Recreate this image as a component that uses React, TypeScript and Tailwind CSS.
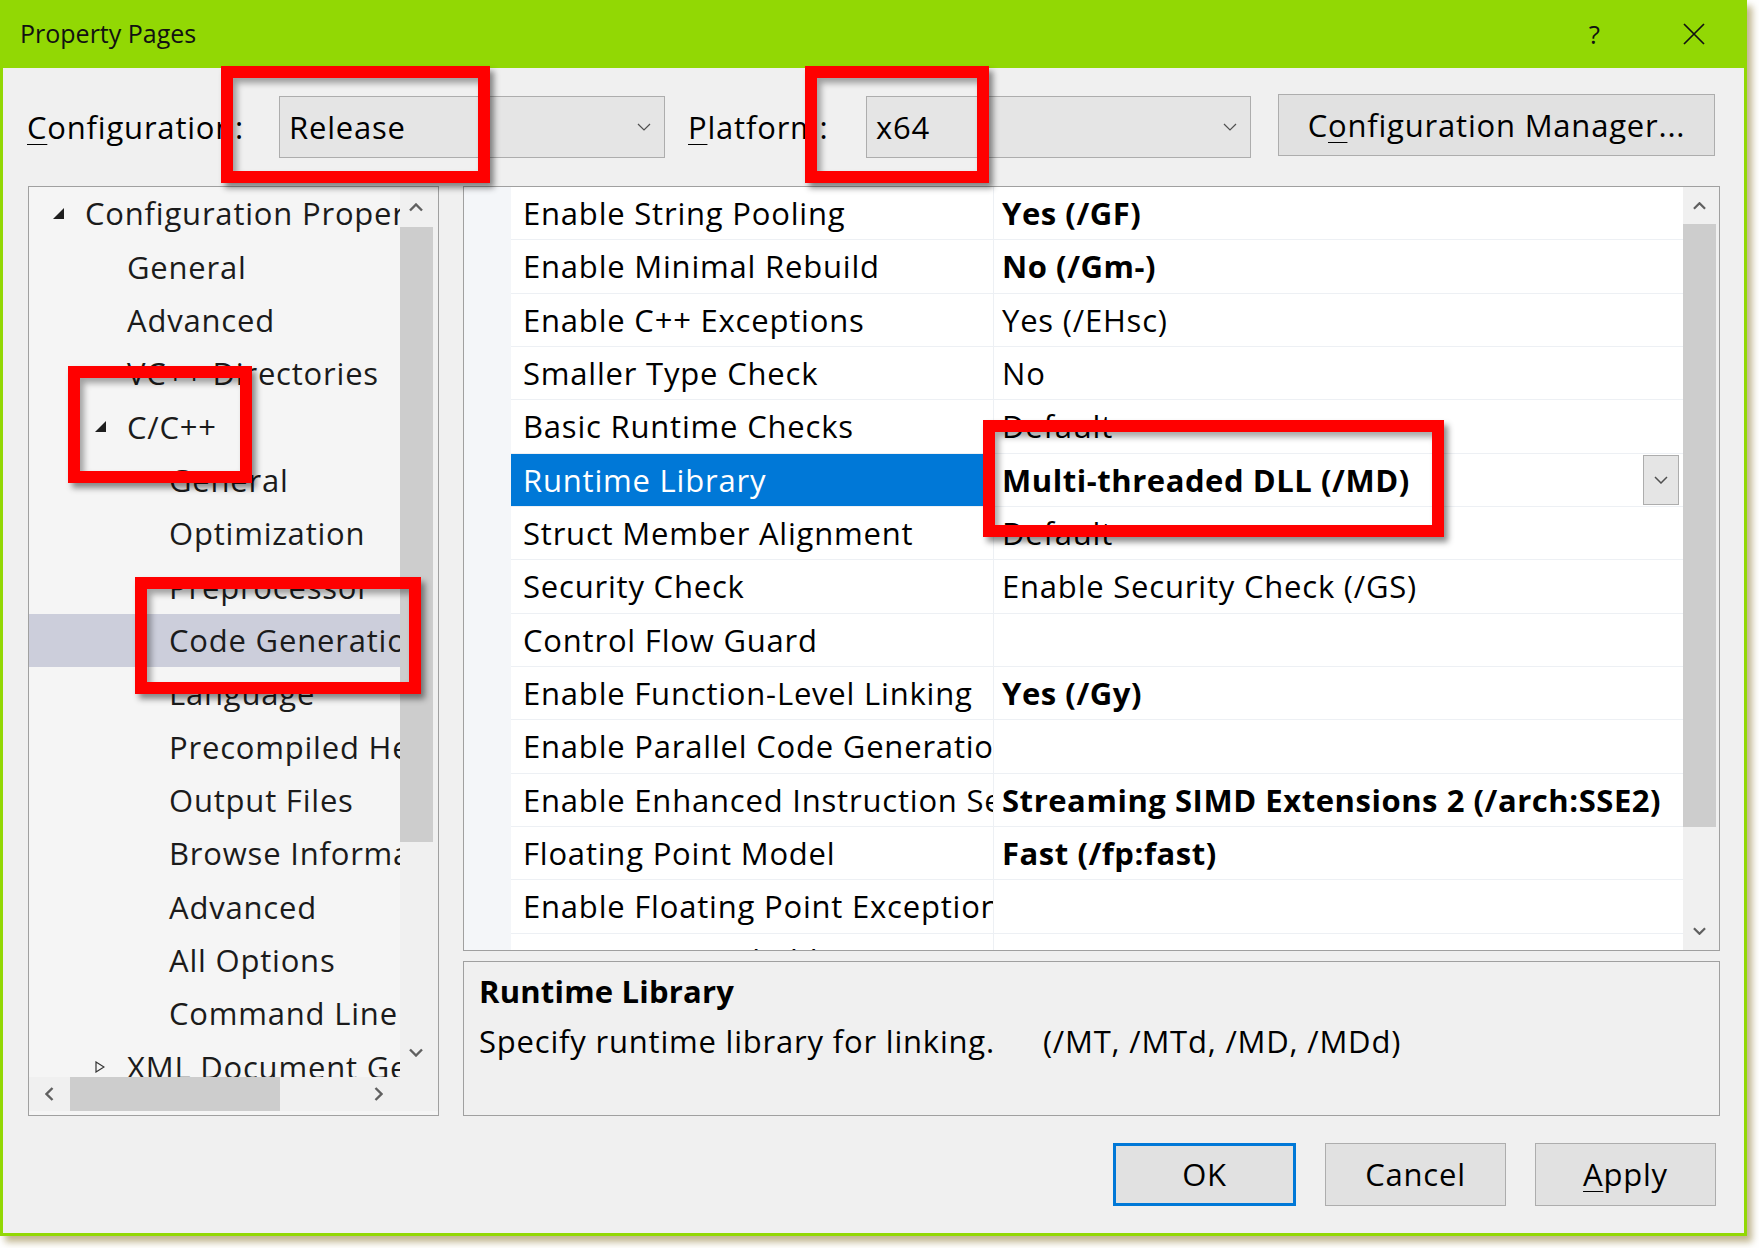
import React from 'react';

type TreeItem = { label: string; level: 0 | 1 | 2; arrow?: 'open' | 'closed'; selected?: boolean };

const treeItems: TreeItem[] = [
  { label: 'Configuration Properties', level: 0, arrow: 'open' },
  { label: 'General', level: 1 },
  { label: 'Advanced', level: 1 },
  { label: 'VC++ Directories', level: 1 },
  { label: 'C/C++', level: 1, arrow: 'open' },
  { label: 'General', level: 2 },
  { label: 'Optimization', level: 2 },
  { label: 'Preprocessor', level: 2 },
  { label: 'Code Generation', level: 2, selected: true },
  { label: 'Language', level: 2 },
  { label: 'Precompiled Headers', level: 2 },
  { label: 'Output Files', level: 2 },
  { label: 'Browse Information', level: 2 },
  { label: 'Advanced', level: 2 },
  { label: 'All Options', level: 2 },
  { label: 'Command Line', level: 2 },
  { label: 'XML Document Generator', level: 1, arrow: 'closed' },
];

const indent = { 0: 'pl-[24px]', 1: 'pl-[66px]', 2: 'pl-[108px]' };

type Prop = { name: string; value: string; bold?: boolean; selected?: boolean };

const props: Prop[] = [
  { name: 'Enable String Pooling', value: 'Yes (/GF)', bold: true },
  { name: 'Enable Minimal Rebuild', value: 'No (/Gm-)', bold: true },
  { name: 'Enable C++ Exceptions', value: 'Yes (/EHsc)' },
  { name: 'Smaller Type Check', value: 'No' },
  { name: 'Basic Runtime Checks', value: 'Default' },
  { name: 'Runtime Library', value: 'Multi-threaded DLL (/MD)', bold: true, selected: true },
  { name: 'Struct Member Alignment', value: 'Default' },
  { name: 'Security Check', value: 'Enable Security Check (/GS)' },
  { name: 'Control Flow Guard', value: '' },
  { name: 'Enable Function-Level Linking', value: 'Yes (/Gy)', bold: true },
  { name: 'Enable Parallel Code Generation', value: '' },
  { name: 'Enable Enhanced Instruction Set', value: 'Streaming SIMD Extensions 2 (/arch:SSE2)', bold: true },
  { name: 'Floating Point Model', value: 'Fast (/fp:fast)', bold: true },
  { name: 'Enable Floating Point Exceptions', value: '' },
  { name: 'Create Hotpatchable Image', value: '' },
  { name: 'Spectre Mitigation', value: '' },
];

const redBoxes = [
  'left-[221px] top-[66px] w-[269px] h-[117px]',
  'left-[805px] top-[66px] w-[184px] h-[117px]',
  'left-[68px] top-[366px] w-[184px] h-[117px]',
  'left-[135px] top-[577px] w-[286px] h-[117px]',
  'left-[983px] top-[420px] w-[461px] h-[117px]',
];

const Chevron = ({ dir, className = '', width = 1.3 }: { dir: 'up' | 'down' | 'left' | 'right'; className?: string; width?: number }) => {
  const vertical = dir === 'up' || dir === 'down';
  const d = { up: 'M1 7l6-6 6 6', down: 'M1 1l6 6 6-6', left: 'M7 1L1 7l6 6', right: 'M1 1l6 6-6 6' }[dir];
  return (
    <svg viewBox={vertical ? '0 0 14 8' : '0 0 8 14'} className={className} fill="none" stroke="currentColor" strokeWidth={width}>
      <path d={d} />
    </svg>
  );
};

const Combo = ({ value, w }: { value: string; w: string }) => (
  <div className={`${w} h-[62px] flex items-center pl-[9px] pr-[13px] bg-[#e5e5e5] border border-[#adadad]`}>
    <span>{value}</span>
    <Chevron dir="down" className="ml-auto w-[14px] h-[8px] text-[#505050]" width={1.2} />
  </div>
);

const Tree = () => (
  <div className="flex flex-col w-[411px] h-[930px] border border-[#a0a0a0] bg-[#f5f5f5] text-[#1b1b1b]">
    <div className="flex flex-1 min-h-0">
      <div className="flex-1 min-w-0 overflow-hidden">
        {treeItems.map((it, i) => (
          <div
            key={i}
            className={`flex items-center h-[53.33px] whitespace-nowrap ${indent[it.level]} ${it.selected ? 'bg-[#cccedb]' : ''}`}
          >
            <span className="w-[32px] shrink-0 flex items-center">
              {it.arrow === 'open' && (
                <svg viewBox="0 0 10 10" className="w-[11px] h-[11px]">
                  <polygon points="10,0 10,10 0,10" fill="#1e1e1e" />
                </svg>
              )}
              {it.arrow === 'closed' && (
                <svg viewBox="0 0 10 12" className="w-[10px] h-[12px]">
                  <polygon points="1,1 9,6 1,11" fill="none" stroke="#333" strokeWidth="1.2" />
                </svg>
              )}
            </span>
            <span>{it.label}</span>
          </div>
        ))}
      </div>
      <div className="w-[38px] shrink-0 flex flex-col bg-[#f0f0f0]">
        <div className="h-[40px] flex items-center pl-[9px]">
          <Chevron dir="up" className="w-[14px] h-[9px] text-[#606060]" width={2.4} />
        </div>
        <div className="h-[615px] w-[33px] bg-[#cdcdcd]" />
        <div className="flex-1 flex items-end pb-[20px] pl-[9px]">
          <Chevron dir="down" className="w-[14px] h-[9px] text-[#606060]" width={2.4} />
        </div>
      </div>
    </div>
    <div className="flex h-[38px] pb-[4px] shrink-0">
      <div className="w-[371px] flex items-center bg-[#f0f0f0]">
        <div className="w-[41px] flex justify-center">
          <Chevron dir="left" className="w-[9px] h-[14px] text-[#606060]" width={2.4} />
        </div>
        <div className="w-[210px] h-full bg-[#cdcdcd]" />
        <div className="flex-1 flex justify-end pr-[17px]">
          <Chevron dir="right" className="w-[9px] h-[14px] text-[#606060]" width={2.4} />
        </div>
      </div>
      <div className="flex-1 bg-[#f0f0f0]" />
    </div>
  </div>
);

const Grid = () => (
  <div className="flex h-[765px] border border-[#a0a0a0] bg-white">
    <div className="flex-1 min-w-0 overflow-hidden">
      {props.map((p, i) => (
        <div key={i} className="flex h-[53.33px]">
          <div className="w-[47px] shrink-0 bg-[#f4f6f9]" />
          <div
            className={`w-[483px] shrink-0 flex items-center pl-[12px] overflow-hidden whitespace-nowrap border-b border-r border-[#edf0f4] ${
              p.selected ? 'bg-[#0078d7] text-white' : ''
            }`}
          >
            {p.name}
          </div>
          <div className="flex-1 min-w-0 flex items-center pl-[8px] overflow-hidden whitespace-nowrap border-b border-[#edf0f4]">
            <span className={p.bold ? 'font-bold tracking-[0.55px]' : ''}>{p.value}</span>
            {p.selected && (
              <div className="ml-auto mr-[4px] w-[36px] h-[50px] flex items-center justify-center bg-[#e5e5e5] border border-[#adadad]">
                <Chevron dir="down" className="w-[14px] h-[8px] text-[#505050]" width={1.5} />
              </div>
            )}
          </div>
        </div>
      ))}
    </div>
    <div className="w-[36px] shrink-0 flex flex-col bg-[#f0f0f0]">
      <div className="h-[37px] flex items-center pl-[10px]">
        <Chevron dir="up" className="w-[13px] h-[8px] text-[#606060]" width={2.4} />
      </div>
      <div className="h-[603px] w-[33px] bg-[#cdcdcd]" />
      <div className="flex-1 flex items-end pb-[15px] pl-[10px]">
        <Chevron dir="down" className="w-[13px] h-[8px] text-[#606060]" width={2.4} />
      </div>
    </div>
  </div>
);

const Button = ({ children, primary }: { children: React.ReactNode; primary?: boolean }) => (
  <div
    className={`h-[63px] flex items-center justify-center bg-[#e1e1e1] ${
      primary ? 'w-[183px] border-[3px] border-[#0078d7]' : 'w-[181px] border border-[#adadad]'
    }`}
  >
    {children}
  </div>
);

export default function App() {
  return (
    <div className="relative w-[1759px] h-[1248px] overflow-hidden bg-white font-['Open_Sans',sans-serif] text-black">
      <div className="flex flex-col w-[1747px] h-[1236px] bg-[#92d804] px-[3px] pb-[3px] shadow-[5px_6px_7px_rgba(140,120,50,0.55)]">
        {/* title bar */}
        <div className="flex items-center h-[68px] shrink-0 pl-[17px] pr-[39px] text-[#111]">
          <span className="text-[25px]">Property Pages</span>
          <span className="ml-auto text-[26px] leading-none">?</span>
          <svg viewBox="0 0 22 22" className="ml-[83px] w-[22px] h-[22px]" stroke="#111" strokeWidth="1.7">
            <path d="M1 1l20 20M21 1L1 21" />
          </svg>
        </div>

        <div className="flex-1 flex flex-col bg-[#f0f0f0] pl-[25px] pr-[24px] pt-[28px] pb-[27px] text-[31px] tracking-[0.8px]">
          {/* configuration row */}
          <div className="flex items-center h-[62px] shrink-0">
            <div className="w-[252px] -ml-px whitespace-nowrap">
              <u className="underline-offset-[5px] decoration-1">C</u>onfiguration:
            </div>
            <Combo value="Release" w="w-[386px]" />
            <div className="w-[201px] pl-[23px] whitespace-nowrap">
              <u className="underline-offset-[5px] decoration-1">P</u>latform:
            </div>
            <Combo value="x64" w="w-[385px]" />
            <div className="ml-[27px] mb-[4px] w-[437px] h-[62px] flex items-center justify-center bg-[#e1e1e1] border border-[#adadad] whitespace-nowrap">
              C<u className="underline-offset-[5px] decoration-1">o</u>nfiguration Manager...
            </div>
          </div>

          {/* main area */}
          <div className="flex mt-[28px] h-[930px] gap-[24px] shrink-0">
            <Tree />
            <div className="flex flex-col w-[1257px] gap-[10px]">
              <Grid />
              <div className="h-[155px] border border-[#a0a0a0] pl-[15px] pt-[4px] leading-[50px]">
                <div className="font-bold tracking-[0.2px]">Runtime Library</div>
                <div className="whitespace-nowrap">
                  Specify runtime library for linking.
                  <span className="ml-[48px]">(/MT, /MTd, /MD, /MDd)</span>
                </div>
              </div>
            </div>
          </div>

          {/* buttons */}
          <div className="flex justify-end gap-[29px] mt-[27px] pr-[4px] shrink-0">
            <Button primary>OK</Button>
            <Button>Cancel</Button>
            <Button>
              <span>
                <u className="underline-offset-[5px] decoration-1">A</u>pply
              </span>
            </Button>
          </div>
        </div>
      </div>

      {redBoxes.map((c, i) => (
        <div
          key={i}
          className={`absolute ${c} border-[12px] border-[#ff0000] shadow-[4px_5px_6px_rgba(0,0,0,0.45),inset_4px_5px_6px_rgba(0,0,0,0.35)]`}
        />
      ))}
    </div>
  );
}
